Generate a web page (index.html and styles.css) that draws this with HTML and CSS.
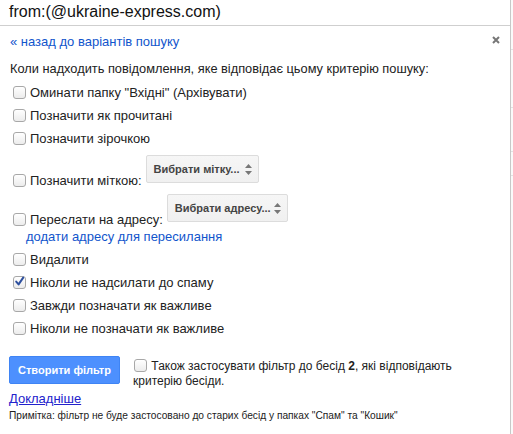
FILE: index.html
```html
<!DOCTYPE html>
<html>
<head>
<meta charset="utf-8">
<link rel="stylesheet" href="styles.css">
</head>
<body>
<div class="page">
  <div class="panel">
    <div class="search">from:(@ukraine-express.com)</div>
    <div class="content">
      <div class="toprow">
        <a class="back">« назад до варіантів пошуку</a>
        <svg class="close" width="8" height="8" viewBox="0 0 8 8"><path d="M1 1L7 7M7 1L1 7" stroke="#777" stroke-width="2" fill="none"/></svg>
      </div>
      <div class="heading">Коли надходить повідомлення, яке відповідає цьому критерію пошуку:</div>
      <div class="row first"><span class="cb"></span><span>Оминати папку "Вхідні" (Архівувати)</span></div>
      <div class="row"><span class="cb"></span><span>Позначити як прочитані</span></div>
      <div class="row"><span class="cb"></span><span>Позначити зірочкою</span></div>
      <div class="row row-label">
        <span class="cb"></span><span>Позначити міткою:</span>
        <span class="select sel-label">Вибрати мітку...<svg class="arrows" width="7" height="11" viewBox="0 0 7 11"><path d="M3.5 0L7 4H0Z M3.5 11L7 7H0Z" fill="#777"/></svg></span>
      </div>
      <div class="row row-fwd">
        <span class="cb"></span><span>Переслати на адресу:</span>
        <span class="select sel-fwd">Вибрати адресу...<svg class="arrows" width="7" height="11" viewBox="0 0 7 11"><path d="M3.5 0L7 4H0Z M3.5 11L7 7H0Z" fill="#777"/></svg></span>
      </div>
      <a class="addlink">додати адресу для пересилання</a>
      <div class="row"><span class="cb"></span><span>Видалити</span></div>
      <div class="row"><span class="cb checked"><svg width="11" height="11" viewBox="0 0 11 11"><path d="M2.2 5.6L4.6 8.4L9.2 1.6" stroke="#2d4f9e" stroke-width="2" fill="none" stroke-linecap="round" stroke-linejoin="round"/></svg></span><span>Ніколи не надсилати до спаму</span></div>
      <div class="row"><span class="cb"></span><span>Завжди позначати як важливе</span></div>
      <div class="row"><span class="cb"></span><span>Ніколи не позначати як важливе</span></div>
      <div class="actions">
        <span class="btn">Створити фільтр</span>
        <div class="also"><span class="cb inl"></span> Також застосувати фільтр до бесід <b>2</b>, які відповідають критерію бесіди.</div>
      </div>
      <a class="more">Докладніше</a>
      <div class="note">Примітка: фільтр не буде застосовано до старих бесід у папках "Спам" та "Кошик"</div>
    </div>
  </div>
  <div class="behind">
    <div class="bl l1"></div>
    <div class="bl l2"></div>
    <div class="bl l3"></div>
    <div class="bl l4"></div>
  </div>
</div>
</body>
</html>
```
FILE: styles.css
```css
html, body {
  margin: 0;
  padding: 0;
}
body {
  background: #eeeeee;
  font-family: "Liberation Sans", Arial, sans-serif;
  font-size: 13px;
  color: #222;
}
.page {
  display: flex;
  width: 513px;
  height: 434px;
  overflow: hidden;
  align-items: flex-start;
}
.panel {
  width: 510px;
  flex: none;
  background: #fff;
  border-right: 1px solid #c8c8c8;
  box-shadow: 0 2px 3px rgba(0, 0, 0, 0.25);
}
.search {
  height: 25px;
  line-height: 24px;
  font-size: 16px;
  padding-left: 9px;
  color: #111;
  border-bottom: 1px solid #cfcfcf;
}
.content {
  padding: 8px 10px 13px 10px;
}
.toprow {
  display: flex;
  justify-content: space-between;
  align-items: center;
  height: 16px;
}
.back {
  line-height: 16px;
  color: #1155cc;
}
.close {
  margin-right: 0;
  margin-top: -4px;
}
.heading {
  line-height: 16px;
  margin-top: 11px;
  font-size: 12.8px;
}
.row {
  display: flex;
  align-items: center;
  height: 23px;
  line-height: 23px;
}
.row.first {
  margin-top: 4px;
}
.cb {
  width: 11px;
  height: 11px;
  border: 1px solid #a8a8a8;
  border-radius: 3px;
  background: linear-gradient(#ffffff, #ececec);
  margin-left: 3px;
  margin-right: 4px;
  flex: none;
  position: relative;
  box-sizing: content-box;
}
.cb.checked svg {
  position: absolute;
  left: 0;
  top: -1px;
}
.row-label {
  height: 42px;
  align-items: flex-end;
}
.row-fwd {
  height: 36px;
  line-height: 16px;
  align-items: flex-end;
}
.row-label .cb {
  margin-bottom: 5px;
}
.row-fwd .cb {
  margin-bottom: 2px;
}
.select {
  display: flex;
  align-items: center;
  justify-content: space-between;
  box-sizing: border-box;
  height: 28px;
  padding: 0 6px 0 7px;
  margin-left: 4px;
  border: 1px solid #dcdcdc;
  border-radius: 2px;
  background: linear-gradient(#f6f6f6, #f0f0f0);
  font-size: 11px;
  font-weight: bold;
  color: #444;
  line-height: 26px;
}
.sel-label {
  width: 113px;
  margin-bottom: 9px;
}
.sel-fwd {
  width: 121px;
  margin-bottom: 6px;
}
.addlink {
  display: block;
  line-height: 16px;
  padding-left: 16px;
  color: #1155cc;
  margin-top: 1px;
  margin-bottom: 3px;
}
.actions {
  display: flex;
  align-items: flex-start;
  margin-top: 16px;
}
.btn {
  display: block;
  box-sizing: border-box;
  width: 111px;
  height: 28px;
  line-height: 26px;
  margin-left: -1px;
  text-align: center;
  background: #4d90fe;
  border: 1px solid #3f84f4;
  border-radius: 2px;
  color: #fff;
  font-size: 11px;
  font-weight: bold;
}
.also {
  width: 330px;
  margin-left: 13px;
  margin-top: 3px;
  line-height: 15px;
  font-size: 12px;
}
.also b {
  font-weight: bold;
}
.cb.inl {
  display: inline-block;
  vertical-align: -2px;
  margin-left: 1px;
  margin-right: 1px;
}
.more {
  display: block;
  margin-top: 2px;
  line-height: 16px;
  color: #2222cc;
  text-decoration: underline;
  width: max-content;
  margin-left: -1px;
}
.note {
  font-size: 10.2px;
  line-height: 13px;
  margin-top: 2px;
  margin-left: -1px;
}
.behind {
  flex: 1;
  height: 434px;
  background: #fafafa;
  position: relative;
}
.bl {
  height: 1px;
  background: #e2e2e2;
  position: absolute;
  left: 0;
  right: 0;
}
.l1 { top: 49px; }
.l2 { top: 107px; }
.l3 { top: 151px; }
.l4 { top: 175px; }
```
